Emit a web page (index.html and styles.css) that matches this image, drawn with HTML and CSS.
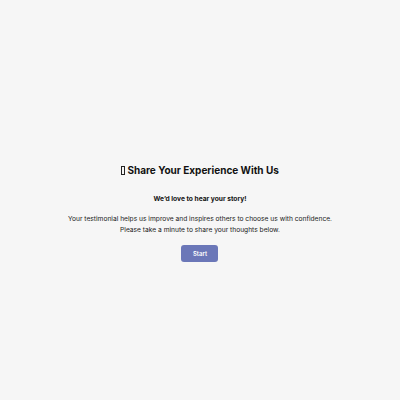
FILE: index.html
```html
<!DOCTYPE html>
<html>
<head>
<meta charset="utf-8">
<link rel="stylesheet" href="styles.css">
</head>
<body>
<main class="page">
  <section class="intro">
    <h1 class="title"><span class="tofu"></span> Share Your Experience With Us</h1>
    <p class="lead">We’d love to hear your story!</p>
    <p class="text">Your testimonial helps us improve and inspires others to choose us with confidence.<br>Please take a minute to share your thoughts below.</p>
    <button class="start">Start</button>
  </section>
</main>
</body>
</html>
```
FILE: styles.css
```css
html, body {
  margin: 0;
  padding: 0;
  height: 100%;
}
body {
  background: #f6f6f6;
  font-family: Inter, "Noto Sans", sans-serif;
  color: #111;
}
.page {
  height: 100%;
  display: flex;
  align-items: center;
  justify-content: center;
}
.intro {
  display: flex;
  flex-direction: column;
  align-items: center;
  text-align: center;
  padding-top: 24px;
}
.title {
  font-size: 10px;
  font-weight: 700;
  line-height: 14px;
  margin: 0 0 17px;
}
.tofu {
  display: inline-block;
  width: 2px;
  height: 7px;
  border: 1px solid #222;
  vertical-align: -1px;
}
.lead {
  font-size: 6.67px;
  font-weight: 700;
  line-height: 11px;
  margin: 0 0 9px;
}
.text {
  font-size: 6.67px;
  line-height: 11px;
  color: #1a1a1a;
  margin: 0 0 9px;
}
.start {
  font-family: inherit;
  font-size: 6px;
  font-weight: 600;
  color: #fff;
  background: #6b77b8;
  border: none;
  border-radius: 3px;
  width: 37px;
  height: 17px;
  padding: 0;
}
```
